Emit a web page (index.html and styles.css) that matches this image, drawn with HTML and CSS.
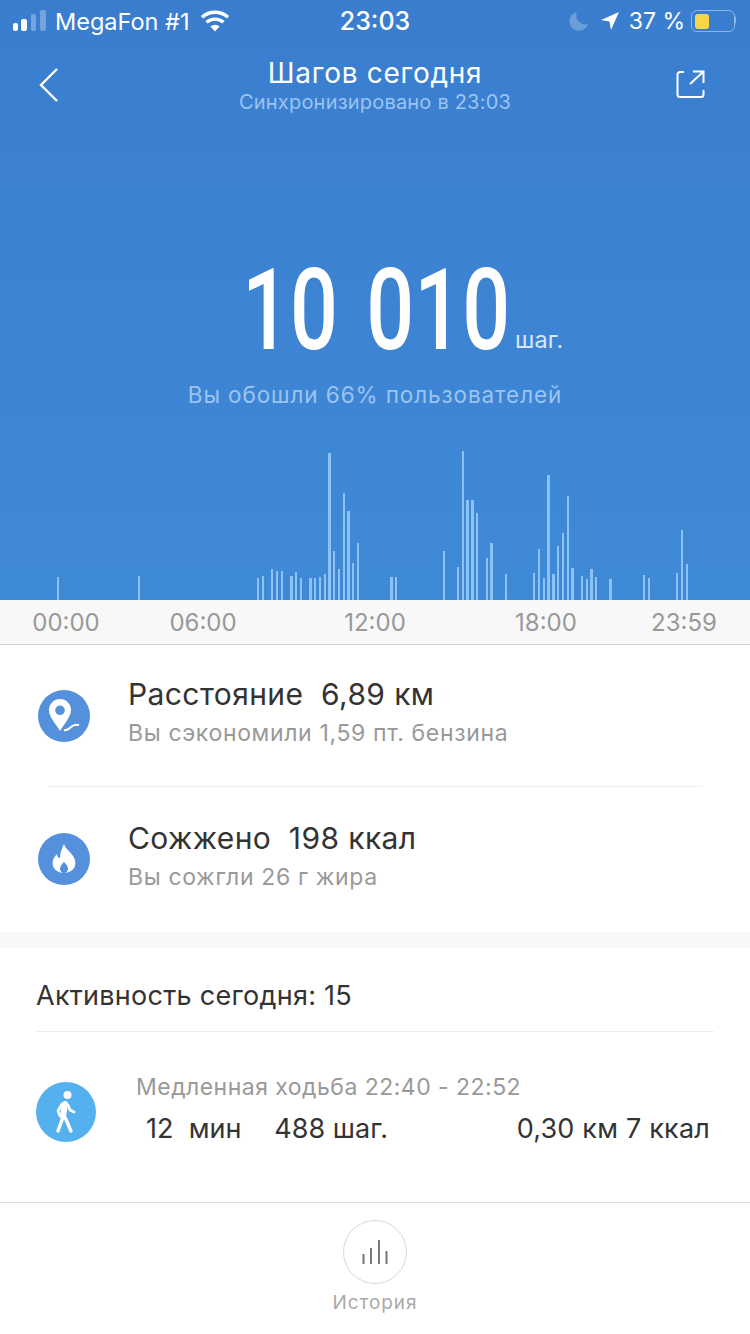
FILE: index.html
```html
<!DOCTYPE html>
<html lang="ru">
<head>
  <meta charset="UTF-8" />
  <meta name="viewport" content="width=device-width, initial-scale=1.0"/>
  <title>Шагов сегодня</title>
  <link rel="stylesheet" href="styles.css">
</head>
<body>
  <div class="hero">
    <!-- статус-бар -->
    <div class="status">
      <div class="status-left">
        <svg class="signal" width="34" height="22" viewBox="0 0 34 22">
          <rect x="0" y="13" width="5" height="8" rx="2" fill="#fff"/>
          <rect x="8" y="9" width="6" height="12" rx="2" fill="#fff"/>
          <rect x="18" y="4" width="5" height="17" rx="2" fill="#fff" opacity=".3"/>
          <rect x="27" y="0" width="6" height="21" rx="2" fill="#fff" opacity=".3"/>
        </svg>
        <span>MegaFon #1</span>
        <svg class="wifi" width="30" height="22" viewBox="0 0 30 22">
          <path d="M15 21.500l-4.600-5a7 7 0 0 1 9.200 0z" fill="#fff"/>
          <path d="M6.500 12.300a13 13 0 0 1 17 0M2 7.200a19.500 19.500 0 0 1 26 0" fill="none" stroke="#fff" stroke-width="3.400"/>
        </svg>
      </div>
      <div class="status-time">23:03</div>
      <div class="status-right">
        <svg width="20" height="20" viewBox="0 0 20 20">
          <path d="M8 1a9.500 9.500 0 1 0 11 12A9 9 0 0 1 8 1z" fill="#fff" opacity=".25"/>
        </svg>
        <svg class="arrow" width="20" height="20" viewBox="0 0 20 20">
          <path d="M19 1L1 9l8.500 1.500L11 19z" fill="#fff"/>
        </svg>
        <span>37 %</span>
        <div class="battery"><div class="battery-fill"></div></div>
      </div>
    </div>

    <div class="topbar">
      <svg class="icon-back" width="22" height="36" viewBox="0 0 22 36">
        <path d="M19 2L3 18l16 16" fill="none" stroke="#fff" stroke-width="2.400"/>
      </svg>
      <div class="topbar-title">
        <div class="title">Шагов сегодня</div>
        <div class="sync">Синхронизировано в 23:03</div>
      </div>
      <svg class="icon-share" width="30" height="30" viewBox="0 0 30 30">
        <path d="M8 3H4a2.500 2.500 0 0 0-2.500 2.500v20A2.500 2.500 0 0 0 4 28h21a2.500 2.500 0 0 0 2.500-2.500V21" fill="none" stroke="#fff" stroke-width="2"/>
        <path d="M14 15L27.500 2.500M17 2.500h10.500V14" fill="none" stroke="#fff" stroke-width="2"/>
      </svg>
    </div>

    <div class="count">
      <span class="count-num">10 010</span><span class="count-unit">шаг.</span>
    </div>
    <div class="percent">Вы обошли 66% пользователей</div>

    <!-- график по минутам -->
    <svg class="chart" width="750" height="152" viewBox="0 0 750 152" fill="#8cc2f5">
      <rect x="57" y="129" width="2" height="23"/>
      <rect x="138" y="128" width="2" height="24"/>
      <rect x="257" y="130" width="2" height="22"/>
      <rect x="262" y="128" width="2" height="24"/>
      <rect x="271" y="121" width="2" height="31"/>
      <rect x="276" y="123" width="2" height="29"/>
      <rect x="281" y="123" width="2" height="29"/>
      <rect x="290" y="128" width="3" height="24"/>
      <rect x="295" y="124" width="2" height="28"/>
      <rect x="300" y="130" width="2" height="22"/>
      <rect x="309" y="130" width="3" height="22"/>
      <rect x="314" y="130" width="2" height="22"/>
      <rect x="319" y="129" width="2" height="23"/>
      <rect x="324" y="126" width="2" height="26"/>
      <rect x="328" y="5" width="3" height="147"/>
      <rect x="333" y="103" width="2" height="49"/>
      <rect x="338" y="121" width="2" height="31"/>
      <rect x="343" y="45" width="2" height="107"/>
      <rect x="347" y="63" width="3" height="89"/>
      <rect x="352" y="115" width="2" height="37"/>
      <rect x="357" y="95" width="2" height="57"/>
      <rect x="390" y="129" width="3" height="23"/>
      <rect x="395" y="129" width="2" height="23"/>
      <rect x="443" y="103" width="2" height="49"/>
      <rect x="457" y="119" width="2" height="33"/>
      <rect x="462" y="3" width="2" height="149"/>
      <rect x="466" y="52" width="3" height="100"/>
      <rect x="471" y="52" width="3" height="100"/>
      <rect x="476" y="65" width="2" height="87"/>
      <rect x="486" y="110" width="2" height="42"/>
      <rect x="490" y="95" width="3" height="57"/>
      <rect x="505" y="126" width="2" height="26"/>
      <rect x="533" y="125" width="2" height="27"/>
      <rect x="538" y="101" width="2" height="51"/>
      <rect x="543" y="130" width="2" height="22"/>
      <rect x="547" y="27" width="3" height="125"/>
      <rect x="552" y="126" width="3" height="26"/>
      <rect x="557" y="98" width="2" height="54"/>
      <rect x="562" y="85" width="2" height="67"/>
      <rect x="567" y="48" width="2" height="104"/>
      <rect x="571" y="120" width="3" height="32"/>
      <rect x="581" y="128" width="2" height="24"/>
      <rect x="586" y="131" width="2" height="21"/>
      <rect x="590" y="121" width="3" height="31"/>
      <rect x="595" y="129" width="2" height="23"/>
      <rect x="609" y="131" width="3" height="21"/>
      <rect x="643" y="127" width="2" height="25"/>
      <rect x="648" y="130" width="2" height="22"/>
      <rect x="676" y="125" width="2" height="27"/>
      <rect x="681" y="82" width="2" height="70"/>
      <rect x="686" y="116" width="2" height="36"/>
    </svg>
  </div>

  <div class="axis">
    <span>00:00</span>
    <span>06:00</span>
    <span>12:00</span>
    <span>18:00</span>
    <span>23:59</span>
  </div>

  <div class="stats">
    <div class="stat stat-first">
      <div class="stat-icon">
        <svg width="34" height="36" viewBox="0 0 34 36">
          <path fill-rule="evenodd" d="M13 1a11 11 0 0 1 11 11c0 7-7 14-11 21C9 26 2 19 2 12A11 11 0 0 1 13 1zm0 6.500a4.800 4.800 0 1 0 0 9.600 4.800 4.800 0 0 0 0-9.600z" fill="#fff"/>
          <path d="M17 32c3 1 5-1 7-3s4-3 8-2" fill="none" stroke="#fff" stroke-width="2"/>
        </svg>
      </div>
      <div class="stat-text">
        <div class="stat-title">Расстояние&nbsp; 6,89 км</div>
        <div class="stat-sub">Вы сэкономили 1,59 пт. бензина</div>
      </div>
    </div>
    <div class="stat-line"></div>
    <div class="stat">
      <div class="stat-icon">
        <svg width="26" height="30" viewBox="0 0 26 30">
          <path fill-rule="evenodd" d="M13 0c1 5 9 9 11 16 2 8-4 13-11 13S0 24 2 16c1-3 3-5 4-6 0 2 1 4 3 4 0-5 2-10 4-14zm0 18c-2 2-4 4-4 7 0 2 2 4 4 4s4-2 4-4c0-3-2-5-4-7z" fill="#fff"/>
        </svg>
      </div>
      <div class="stat-text">
        <div class="stat-title">Сожжено&nbsp; 198 ккал</div>
        <div class="stat-sub">Вы сожгли 26 г жира</div>
      </div>
    </div>
  </div>

  <div class="band"></div>

  <div class="activity">
    <div class="activity-head">Активность сегодня: 15</div>
    <div class="walk">
      <div class="walk-icon">
        <svg width="26" height="44" viewBox="0 0 26 44">
          <circle cx="14.500" cy="5" r="4" fill="#fff"/>
          <path d="M12 14L10 26" fill="none" stroke="#fff" stroke-width="6" stroke-linecap="round"/>
          <path d="M10 27L5 41M11 25L18 41" fill="none" stroke="#fff" stroke-width="3.400" stroke-linecap="round"/>
          <path d="M9 14L5 21l2 5M15 15l2 5 4 2" fill="none" stroke="#fff" stroke-width="2.800" stroke-linecap="round" stroke-linejoin="round"/>
        </svg>
      </div>
      <div class="walk-body">
        <div class="walk-title">Медленная ходьба 22:40 - 22:52</div>
        <div class="walk-vals">
          <span class="walk-time">12&nbsp; мин</span>
          <span class="walk-steps">488 шаг.</span>
          <span class="walk-rest">0,30 км 7 ккал</span>
        </div>
      </div>
    </div>
  </div>

  <div class="bottom">
    <div class="history-btn">
      <svg width="28" height="24" viewBox="0 0 28 24">
        <path d="M2.500 14v10M10 8v16M18 0v24M25.500 11v13" fill="none" stroke="#777" stroke-width="2"/>
      </svg>
    </div>
    <div class="history-label">История</div>
  </div>
</body>
</html>
```

FILE: styles.css
```css
html, body {
  margin: 0;
  padding: 0;
}
body {
  width: 750px;
  height: 1334px;
  overflow: hidden;
  background: #fff;
  font-family: Inter, "Noto Sans", sans-serif;
  color: #333;
}
.hero {
  height: 600px;
  background: linear-gradient(#3a7dcf, #3f8ad7);
  color: #fff;
  display: flex;
  flex-direction: column;
}
.status {
  height: 42px;
  padding: 0 15px 0 13px;
  display: flex;
  align-items: center;
  justify-content: space-between;
  font-size: 23.500px;
  position: relative;
}
.status-left, .status-right {
  display: flex;
  align-items: center;
}
.status-left span {
  margin: 0 10px 0 8px;
}
.status-time {
  font-size: 25px;
  font-weight: 500;
  position: absolute;
  left: 0;
  right: 0;
  text-align: center;
}
.status-right span {
  font-size: 23px;
}
.status-right .arrow {
  margin: 0 9px 0 11px;
}
.battery {
  width: 44px;
  height: 22px;
  margin-left: 6px;
  padding: 2.500px;
  box-sizing: border-box;
  border: 1.500px solid #8cb6e8;
  border-radius: 6px;
  position: relative;
}
.battery::after {
  content: "";
  position: absolute;
  left: 42px;
  top: 5px;
  width: 2px;
  height: 8px;
  background: #8cb6e8;
  border-radius: 0 2px 2px 0;
}
.battery-fill {
  width: 14px;
  height: 100%;
  background: #f8d648;
  border-radius: 3px;
}
.topbar {
  height: 84px;
  padding: 0 38px;
  display: grid;
  grid-template-columns: 1fr auto 1fr;
  align-items: start;
}
.icon-back {
  margin-top: 25px;
}
.icon-share {
  margin: 27px 6px 0 0;
  justify-self: end;
}
.topbar-title {
  text-align: center;
  padding-top: 14px;
}
.title {
  font-size: 28px;
  line-height: 34px;
  letter-spacing: .7px;
}
.sync {
  font-size: 20px;
  line-height: 25px;
  letter-spacing: .2px;
  color: #9cc4f2;
}
.count {
  margin-top: 129px;
  padding-left: 55px;
  height: 110px;
  display: flex;
  justify-content: center;
  align-items: flex-end;
}
.count-num {
  display: inline-block;
  font-family: Roboto, sans-serif;
  font-size: 114px;
  line-height: 110px;
  font-weight: 500;
  word-spacing: 10px;
  white-space: nowrap;
  transform: scaleX(.74);
  margin: 0 -46.500px;
}
.count-unit {
  font-size: 23.500px;
  margin: 0 0 7px 4px;
  line-height: 36px;
  color: #d8e8fa;
}
.percent {
  margin-top: 15px;
  text-align: center;
  font-size: 22.500px;
  line-height: 30px;
  letter-spacing: .9px;
  color: #9cc4f2;
}
.chart {
  display: block;
  margin-top: auto;
}
.axis {
  height: 44px;
  background: #f8f8f8;
  border-bottom: 1px solid #d2d2d2;
  display: grid;
  grid-template-columns: 132px 142px 202px 140px 136px;
  align-items: center;
  font-size: 24px;
  color: #999;
  text-align: center;
}
.stats {
  height: 287px;
}
.stat {
  height: 144px;
  display: flex;
  align-items: center;
  padding-left: 38px;
}
.stat-first {
  height: 141px;
}
.stat-icon {
  width: 52px;
  height: 52px;
  border-radius: 50%;
  background: #5490dc;
  margin-right: 38px;
  display: flex;
  align-items: center;
  justify-content: center;
  flex-shrink: 0;
}
.stat-text {
  padding-bottom: 6px;
}
.stat-title {
  font-size: 30px;
  line-height: 40px;
  letter-spacing: .4px;
}
.stat-sub {
  font-size: 23px;
  line-height: 36px;
  letter-spacing: .65px;
  margin-top: 1px;
  color: #999;
}
.stat-line {
  height: 1px;
  margin: 0 48px;
  background: #eee;
}
.band {
  height: 16px;
  background: #f7f7f7;
}
.activity {
  height: 254px;
  padding: 0 36px;
}
.activity-head {
  height: 83px;
  line-height: 95px;
  font-size: 27px;
  letter-spacing: .27px;
  border-bottom: 1px solid #eee;
}
.walk {
  display: flex;
  align-items: center;
  margin-top: 38px;
}
.walk-icon {
  width: 60px;
  height: 60px;
  border-radius: 50%;
  background: #55b0ee;
  display: flex;
  align-items: center;
  justify-content: center;
  flex-shrink: 0;
}
.walk-body {
  flex: 1;
  margin-left: 40px;
  padding-bottom: 2px;
}
.walk-title {
  font-size: 23px;
  line-height: 34px;
  letter-spacing: .47px;
  margin-bottom: 2px;
  color: #999;
}
.walk-vals {
  display: flex;
  font-size: 27px;
  line-height: 46px;
  padding: 0 4px 0 10px;
}
.walk-steps {
  margin-left: 33px;
}
.walk-rest {
  margin-left: auto;
  letter-spacing: .2px;
}
.bottom {
  height: 131px;
  border-top: 1px solid #ddd;
  display: flex;
  flex-direction: column;
  align-items: center;
}
.history-btn {
  width: 62px;
  height: 62px;
  margin-top: 17px;
  border: 1px solid #d8d8d8;
  border-radius: 50%;
  display: flex;
  align-items: center;
  justify-content: center;
}
.history-label {
  font-size: 19px;
  line-height: 38px;
  letter-spacing: .9px;
  color: #aaa;
}
```
